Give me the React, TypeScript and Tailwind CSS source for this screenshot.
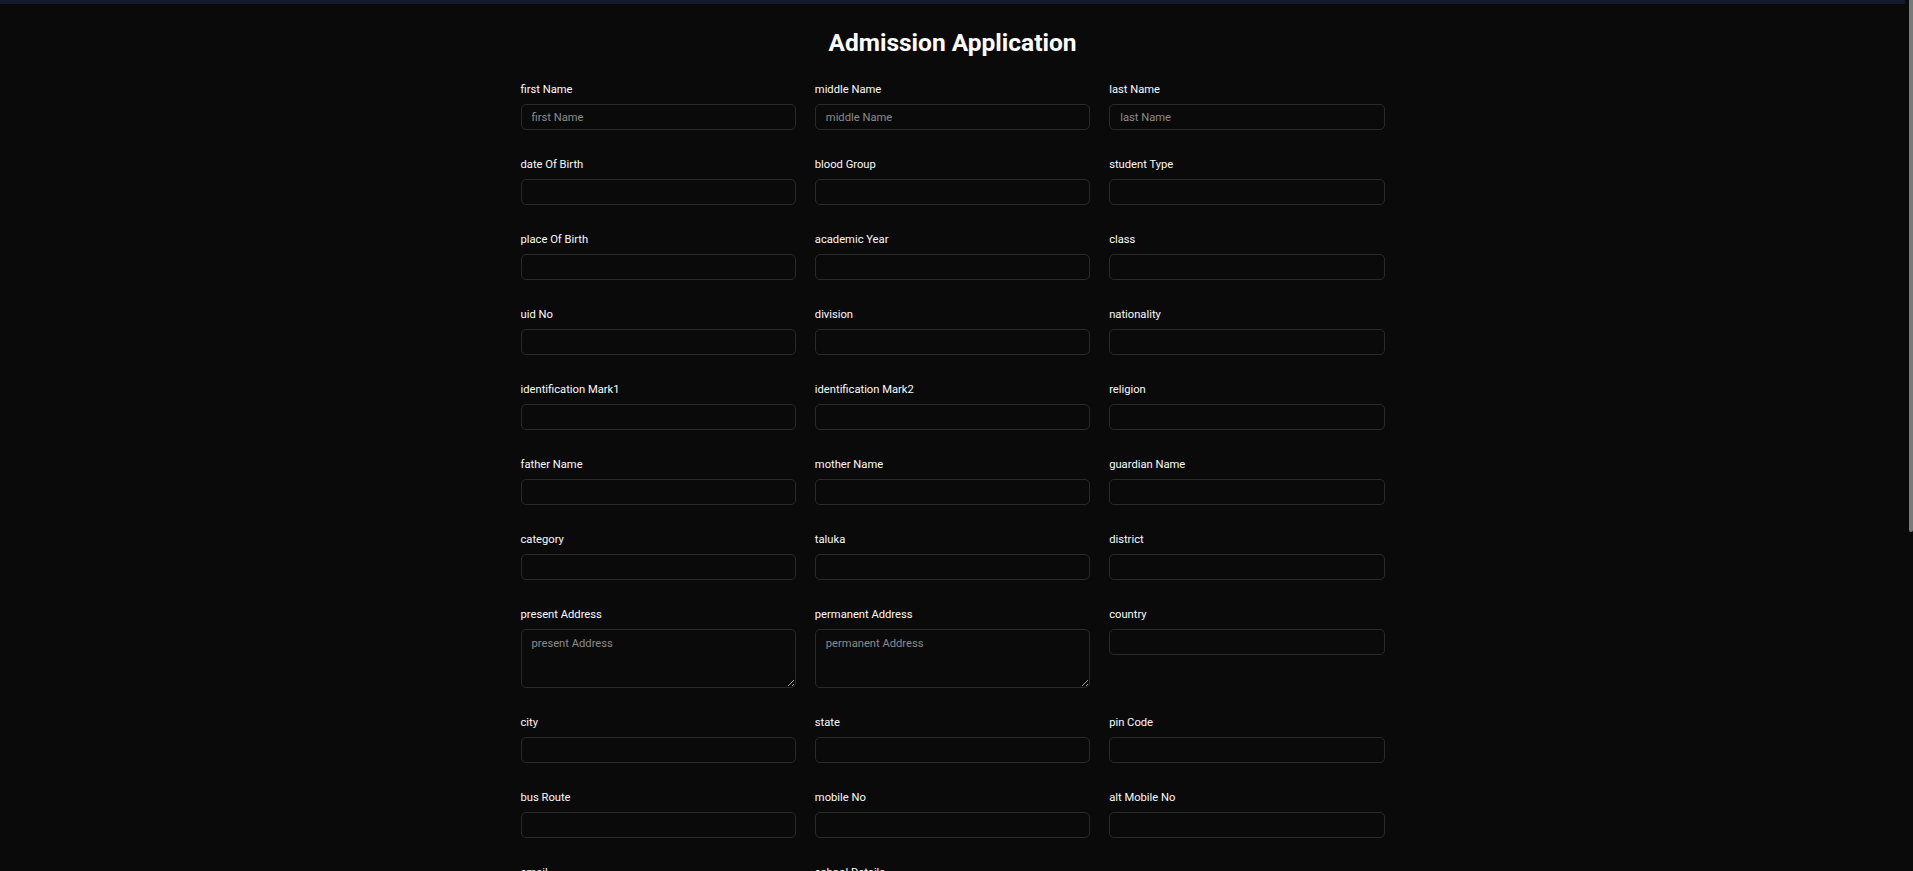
type Field = { name: string; placeholder?: boolean; area?: boolean; empty?: boolean };

const fields: Field[] = [
  { name: "first Name", placeholder: true },
  { name: "middle Name", placeholder: true },
  { name: "last Name", placeholder: true },
  { name: "date Of Birth" },
  { name: "blood Group" },
  { name: "student Type" },
  { name: "place Of Birth" },
  { name: "academic Year" },
  { name: "class" },
  { name: "uid No" },
  { name: "division" },
  { name: "nationality" },
  { name: "identification Mark1" },
  { name: "identification Mark2" },
  { name: "religion" },
  { name: "father Name" },
  { name: "mother Name" },
  { name: "guardian Name" },
  { name: "category" },
  { name: "taluka" },
  { name: "district" },
  { name: "present Address", placeholder: true, area: true },
  { name: "permanent Address", placeholder: true, area: true },
  { name: "country" },
  { name: "city" },
  { name: "state" },
  { name: "pin Code" },
  { name: "bus Route" },
  { name: "mobile No" },
  { name: "alt Mobile No" },
  { name: "email" },
  { name: "school Details" },
  { name: "", empty: true },
  { name: "previous School" },
  { name: "last Class Attended" },
  { name: "admission Date" },
  { name: "father Occupation" },
  { name: "mother Occupation" },
  { name: "annual Income" },
  { name: "caste" },
  { name: "sub Caste" },
  { name: "mother Tongue" },
  { name: "bank Name" },
  { name: "account No" },
  { name: "ifsc Code" },
];

function FormField({ f }: { f: Field }) {
  if (f.empty) return <div />;
  return (
    <div className="flex flex-col">
      <label className="mb-[6px] text-[11.2px] leading-4 font-normal text-[#fafafa]">{f.name}</label>
      {f.area ? (
        <textarea
          placeholder={f.name}
          className="h-[59px] w-full rounded-[5px] border border-[#2a2a2a] bg-transparent px-[10px] py-[6px] text-[11.2px] leading-4 text-white outline-none placeholder:text-[#8b8b8b]"
        />
      ) : (
        <input
          type="text"
          placeholder={f.placeholder ? f.name : undefined}
          className="h-[26px] w-full rounded-[5px] border border-[#2a2a2a] bg-transparent px-[10px] text-[11.2px] text-white outline-none placeholder:text-[#8b8b8b]"
        />
      )}
    </div>
  );
}

export default function App() {
  return (
    <div className="flex h-screen bg-[#0a0a0a] font-['Roboto',sans-serif]">
      <main className="min-w-0 flex-1 overflow-y-auto [scrollbar-width:none]">
        <div className="h-1 bg-[#131a2d]" />
        <div className="mx-auto w-[864px] pt-6 pb-[160px]">
          <h1 className="text-center text-[24.5px] leading-[30px] font-bold text-white">Admission Application</h1>
          <form className="mt-6 grid grid-cols-3 gap-x-[19px] gap-y-[27px]">
            {fields.map((f, i) => (
              <FormField key={i} f={f} />
            ))}
          </form>
          <div className="mt-6 flex justify-end">
            <button type="button" className="h-[29px] rounded-[5px] bg-white px-4 text-[11.2px] font-medium text-[#0a0a0a]">
              Submit
            </button>
          </div>
        </div>
      </main>
      {/* scrollbar rail */}
      <div className="flex w-2 justify-end">
        <div className="h-[532px] w-[4px] rounded-b-sm bg-[#7a7a7a]" />
      </div>
    </div>
  );
}
